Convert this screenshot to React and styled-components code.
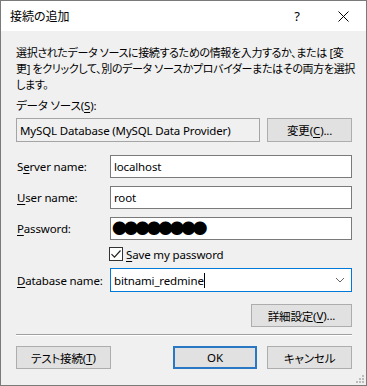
import React from 'react';
import styled, { createGlobalStyle } from 'styled-components';

const GlobalStyle = createGlobalStyle`
  html, body {
    margin: 0;
    padding: 0;
    background: #ffffff;
  }
  body {
    font-family: "Noto Sans", "Noto Sans CJK JP", sans-serif;
    font-size: 11.5px;
    letter-spacing: -0.15px;
    font-feature-settings: "palt";
    color: #000;
  }
`;

const Window = styled.div`
  position: relative;
  box-sizing: border-box;
  width: 367px;
  height: 386px;
  border: 1px solid #7a7a7a;
  background: #f0f0f0;
  display: flex;
  flex-direction: column;
  overflow: hidden;
`;

const TitleBar = styled.div`
  height: 30px;
  background: #ffffff;
  display: flex;
  align-items: center;
  padding-left: 9px;
  flex-shrink: 0;
`;

const Title = styled.div`
  flex: 1;
  font-size: 12px;
  letter-spacing: 0;
`;

const TitleButton = styled.div`
  width: 46px;
  height: 30px;
  display: flex;
  align-items: center;
  justify-content: center;
  font-size: 13px;
`;

const Body = styled.div`
  padding: 14px 14px 0 15px;
  display: flex;
  flex-direction: column;
`;

const Description = styled.p`
  margin: 0;
  font-size: 11px;
  letter-spacing: -0.35px;
  line-height: 16px;
  white-space: nowrap;
  span {
    display: block;
  }
`;

const SectionLabel = styled.div`
  margin-top: 6px;
  line-height: 14px;
`;

const Row = styled.div`
  display: flex;
  align-items: center;
  margin-top: ${(p) => p.$gap || 8}px;
  justify-content: ${(p) => p.$end ? 'flex-end' : 'flex-start'};
`;

const ReadOnlyBox = styled.div`
  box-sizing: border-box;
  width: 245px;
  height: 24px;
  border: 1px solid #a5a5a5;
  background: #f0f0f0;
  padding-left: 3px;
  display: flex;
  align-items: center;
`;

const Button = styled.div`
  box-sizing: border-box;
  width: ${(p) => p.$w}px;
  height: ${(p) => p.$h || 24}px;
  margin-left: ${(p) => p.$ml || 0}px;
  background: #e1e1e1;
  border: ${(p) => p.$primary ? '2px solid #2a78c3' : '1px solid #adadad'};
  display: flex;
  align-items: center;
  justify-content: center;
`;

const FieldLabel = styled.div`
  width: 93px;
  flex-shrink: 0;
  padding-left: 1px;
`;

const Input = styled.div`
  box-sizing: border-box;
  width: 244px;
  height: 23px;
  border: 1px solid #7a7a7a;
  background: #ffffff;
  padding-left: 3px;
  display: flex;
  align-items: center;
`;

const Dots = styled.span`
  font-size: 15px;
  letter-spacing: -3.5px;
  line-height: 1;
  margin-left: -2px;
`;

const CheckRow = styled.label`
  display: flex;
  align-items: center;
  height: 14px;
  margin-top: 7px;
  margin-left: 93px;
  gap: 3px;
`;

const Combo = styled.div`
  box-sizing: border-box;
  width: 243px;
  height: 24px;
  border: 1px solid #0078d7;
  background: #ffffff;
  padding: 0 6px 0 3px;
  display: flex;
  align-items: center;
`;

const ComboText = styled.div`
  flex: 1;
  display: flex;
  align-items: center;
`;

const Caret = styled.span`
  display: inline-block;
  width: 1px;
  height: 15px;
  background: #000;
`;

const Separator = styled.div`
  margin-top: 7px;
  height: 1px;
  background: #a0a0a0;
  border-bottom: 1px solid #ffffff;
`;

const Footer = styled.div`
  display: flex;
  align-items: center;
  margin-top: 10px;
`;

const U = styled.span`
  text-decoration: underline;
  text-underline-offset: 2px;
`;

const Grip = styled.svg`
  position: absolute;
  right: 1px;
  bottom: 1px;
`;

const CheckIcon = () => (
  <svg width="14" height="14" viewBox="0 0 14 14">
    <rect x="0.5" y="0.5" width="13" height="13" fill="#fff" stroke="#333" />
    <path d="M2.5 7.2 L5.5 10.2 L11.5 3.5" fill="none" stroke="#222" strokeWidth="1.2" />
  </svg>
);

const Chevron = () => (
  <svg width="10" height="6" viewBox="0 0 10 6">
    <path d="M1 1 L5 5 L9 1" fill="none" stroke="#666" strokeWidth="1" />
  </svg>
);

const CloseIcon = () => (
  <svg width="11" height="11" viewBox="0 0 11 11">
    <path d="M0.5 0.5 L10.5 10.5 M10.5 0.5 L0.5 10.5" stroke="#000" strokeWidth="1" />
  </svg>
);

export default function App() {
  return (
    <>
      <GlobalStyle />
      <Window>
        <TitleBar>
          <Title>接続の追加</Title>
          <TitleButton>?</TitleButton>
          <TitleButton><CloseIcon /></TitleButton>
        </TitleBar>
        <Body>
          <Description>
            <span>選択されたデータ ソースに接続するための情報を入力するか、または [変</span>
            <span>更] をクリックして、別のデータ ソースかプロバイダーまたはその両方を選択</span>
            <span>します。</span>
          </Description>
          <SectionLabel>データ ソース(<U>S</U>):</SectionLabel>
          <Row $gap={5}>
            <ReadOnlyBox>MySQL Database (MySQL Data Provider)</ReadOnlyBox>
            <Button $w={85} $ml={7}>変更(<U>C</U>)...</Button>
          </Row>
          <Row $gap={13}>
            <FieldLabel>S<U>e</U>rver name:</FieldLabel>
            <Input>localhost</Input>
          </Row>
          <Row>
            <FieldLabel><U>U</U>ser name:</FieldLabel>
            <Input>root</Input>
          </Row>
          <Row>
            <FieldLabel><U>P</U>assword:</FieldLabel>
            <Input><Dots>●●●●●●●●</Dots></Input>
          </Row>
          <CheckRow>
            <CheckIcon />
            <span><U>S</U>ave my password</span>
          </CheckRow>
          <Row $gap={7}>
            <FieldLabel><U>D</U>atabase name:</FieldLabel>
            <Combo>
              <ComboText>bitnami_redmine<Caret /></ComboText>
              <Chevron />
            </Combo>
          </Row>
          <Row $gap={12} $end>
            <Button $w={101} $h={23}>詳細設定(<U>V</U>)...</Button>
          </Row>
          <Separator />
          <Footer>
            <Button $w={95} $h={23}>テスト接続(<U>T</U>)</Button>
            <Button $w={85} $h={23} $ml={62} $primary>OK</Button>
            <Button $w={85} $h={23} $ml={10}>キャンセル</Button>
          </Footer>
        </Body>
        <Grip width="10" height="10" viewBox="0 0 10 10">
          <rect x="7" y="1" width="2" height="2" fill="#bcbcbc" />
          <rect x="4" y="4" width="2" height="2" fill="#bcbcbc" />
          <rect x="7" y="4" width="2" height="2" fill="#bcbcbc" />
          <rect x="1" y="7" width="2" height="2" fill="#bcbcbc" />
          <rect x="4" y="7" width="2" height="2" fill="#bcbcbc" />
          <rect x="7" y="7" width="2" height="2" fill="#bcbcbc" />
        </Grip>
      </Window>
    </>
  );
}
